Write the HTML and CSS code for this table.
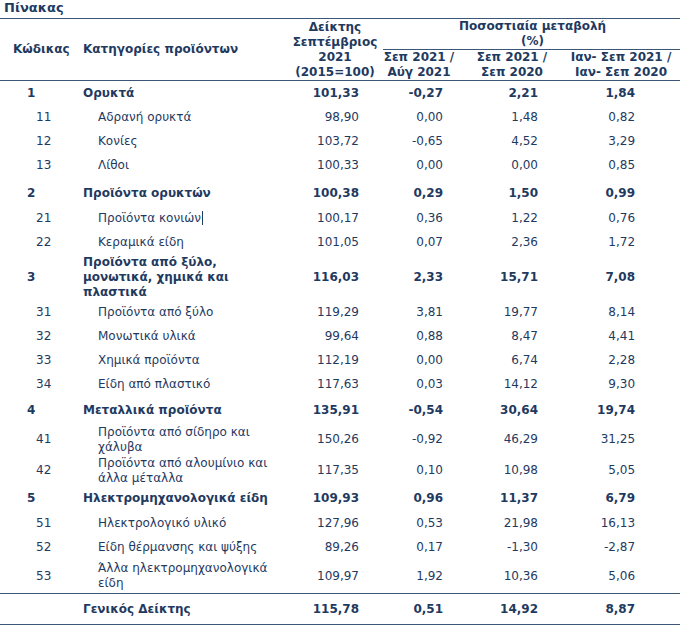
FILE: index.html
```html
<!DOCTYPE html>
<html lang="el">
<head>
<meta charset="utf-8">
<link rel="stylesheet" href="styles.css">
</head>
<body>
<div class="title">Πίνακας</div>
<table class="tbl">
  <colgroup>
    <col class="ca"><col class="cb"><col class="cc"><col class="cd"><col class="ce"><col class="cf">
  </colgroup>
  <thead>
    <tr class="hr1">
      <th rowspan="2" class="h-code">Κώδικας</th>
      <th rowspan="2" class="h-cat">Κατηγορίες προϊόντων</th>
      <th rowspan="2" class="h-idx">Δείκτης<br>Σεπτέμβριος<br>2021<br>(2015=100)</th>
      <th colspan="3" class="h-pct">Ποσοστιαία μεταβολή<br>(%)</th>
    </tr>
    <tr class="hr2">
      <th class="h-d">Σεπ 2021 /<br>Αύγ 2021</th>
      <th class="h-e">Σεπ 2021 /<br>Σεπ 2020</th>
      <th class="h-f">Ιαν- Σεπ 2021 /<br>Ιαν- Σεπ 2020</th>
    </tr>
  </thead>
  <tbody>
    <tr class="grp h24"><td class="code">1</td><td class="cat">Ορυκτά</td><td class="nc">101,33</td><td class="nd">-0,27</td><td class="ne">2,21</td><td class="nf">1,84</td></tr>
    <tr class="sub h24"><td class="code">11</td><td class="cat">Αδρανή ορυκτά</td><td class="nc">98,90</td><td class="nd">0,00</td><td class="ne">1,48</td><td class="nf">0,82</td></tr>
    <tr class="sub h24"><td class="code">12</td><td class="cat">Κονίες</td><td class="nc">103,72</td><td class="nd">-0,65</td><td class="ne">4,52</td><td class="nf">3,29</td></tr>
    <tr class="sub h24"><td class="code">13</td><td class="cat">Λίθοι</td><td class="nc">100,33</td><td class="nd">0,00</td><td class="ne">0,00</td><td class="nf">0,85</td></tr>
    <tr class="grp h29"><td class="code">2</td><td class="cat">Προϊόντα ορυκτών</td><td class="nc">100,38</td><td class="nd">0,29</td><td class="ne">1,50</td><td class="nf">0,99</td></tr>
    <tr class="sub h24"><td class="code">21</td><td class="cat">Προϊόντα κονιών<span class="caret"></span></td><td class="nc">100,17</td><td class="nd">0,36</td><td class="ne">1,22</td><td class="nf">0,76</td></tr>
    <tr class="sub h24"><td class="code">22</td><td class="cat">Κεραμικά είδη</td><td class="nc">101,05</td><td class="nd">0,07</td><td class="ne">2,36</td><td class="nf">1,72</td></tr>
    <tr class="grp h46"><td class="code">3</td><td class="cat">Προϊόντα από ξύλο,<br>μονωτικά, χημικά και<br>πλαστικά</td><td class="nc">116,03</td><td class="nd">2,33</td><td class="ne">15,71</td><td class="nf">7,08</td></tr>
    <tr class="sub h24"><td class="code">31</td><td class="cat">Προϊόντα από ξύλο</td><td class="nc">119,29</td><td class="nd">3,81</td><td class="ne">19,77</td><td class="nf">8,14</td></tr>
    <tr class="sub h24"><td class="code">32</td><td class="cat">Μονωτικά υλικά</td><td class="nc">99,64</td><td class="nd">0,88</td><td class="ne">8,47</td><td class="nf">4,41</td></tr>
    <tr class="sub h24"><td class="code">33</td><td class="cat">Χημικά προϊόντα</td><td class="nc">112,19</td><td class="nd">0,00</td><td class="ne">6,74</td><td class="nf">2,28</td></tr>
    <tr class="sub h24"><td class="code">34</td><td class="cat">Είδη από πλαστικό</td><td class="nc">117,63</td><td class="nd">0,03</td><td class="ne">14,12</td><td class="nf">9,30</td></tr>
    <tr class="grp h28"><td class="code">4</td><td class="cat">Μεταλλικά προϊόντα</td><td class="nc">135,91</td><td class="nd">-0,54</td><td class="ne">30,64</td><td class="nf">19,74</td></tr>
    <tr class="sub h31"><td class="code">41</td><td class="cat">Προϊόντα από σίδηρο και<br>χάλυβα</td><td class="nc">150,26</td><td class="nd">-0,92</td><td class="ne">46,29</td><td class="nf">31,25</td></tr>
    <tr class="sub h31"><td class="code">42</td><td class="cat">Προϊόντα από αλουμίνιο και<br>άλλα μέταλλα</td><td class="nc">117,35</td><td class="nd">0,10</td><td class="ne">10,98</td><td class="nf">5,05</td></tr>
    <tr class="grp h26"><td class="code">5</td><td class="cat">Ηλεκτρομηχανολογικά είδη</td><td class="nc">109,93</td><td class="nd">0,96</td><td class="ne">11,37</td><td class="nf">6,79</td></tr>
    <tr class="sub h24"><td class="code">51</td><td class="cat">Ηλεκτρολογικό υλικό</td><td class="nc">127,96</td><td class="nd">0,53</td><td class="ne">21,98</td><td class="nf">16,13</td></tr>
    <tr class="sub h24"><td class="code">52</td><td class="cat">Είδη θέρμανσης και ψύξης</td><td class="nc">89,26</td><td class="nd">0,17</td><td class="ne">-1,30</td><td class="nf">-2,87</td></tr>
    <tr class="sub h35"><td class="code">53</td><td class="cat">Άλλα ηλεκτρομηχανολογικά<br>είδη</td><td class="nc">109,97</td><td class="nd">1,92</td><td class="ne">10,36</td><td class="nf">5,06</td></tr>
    <tr class="grp total h30"><td class="code"></td><td class="cat">Γενικός Δείκτης</td><td class="nc">115,78</td><td class="nd">0,51</td><td class="ne">14,92</td><td class="nf">8,87</td></tr>
  </tbody>
</table>
</body>
</html>
```
FILE: styles.css
```css
html, body {
  margin: 0;
  padding: 0;
  background: #ffffff;
}
body {
  font-family: "DejaVu Sans", Verdana, sans-serif;
  font-size: 12px;
  line-height: 15px;
  color: #1f3a5f;
}
.title {
  height: 18px;
  line-height: 16px;
  padding-left: 4px;
  font-weight: bold;
  font-size: 13px;
}
.tbl {
  border-collapse: collapse;
  table-layout: fixed;
  width: 680px;
}
.ca { width: 77px; }
.cb { width: 208px; }
.cc { width: 98px; }
.cd { width: 72px; }
.ce { width: 114px; }
.cf { width: 111px; }

.tbl th, .tbl td {
  padding: 0;
  vertical-align: middle;
}
.tbl th {
  font-weight: bold;
  text-align: center;
}
.tbl .hr1 th {
  border-top: 1px solid #3b5676;
  height: 28px;
}
.tbl .hr2 th {
  height: 27px;
  border-top: 1px solid #3b5676;
  border-bottom: 1px solid #3b5676;
}
.tbl .h-code, .tbl .h-cat, .tbl .h-idx {
  border-bottom: 1px solid #3b5676;
}
.tbl .h-code {
  text-align: left;
  padding-left: 13px;
}
.tbl .h-cat {
  text-align: left;
  padding-left: 6px;
}
.tbl .h-idx {
  padding-left: 2px;
}
.tbl .h-f {
  padding-right: 7px;
}
.tbl .h-pct {
  padding-left: 2px;
}

.tbl .code {
  text-align: left;
}
.tbl .grp td { font-weight: bold; }
.tbl .grp .code { padding-left: 27px; }
.tbl .sub .code { padding-left: 36px; }
.tbl .grp .cat { padding-left: 6px; }
.tbl .sub .cat { padding-left: 21px; }

.tbl .nc, .tbl .nd, .tbl .ne, .tbl .nf { text-align: right; }
.tbl .nc { padding-right: 24px; }
.tbl .nd { padding-right: 12px; }
.tbl .ne { padding-right: 31px; }
.tbl .nf { padding-right: 45px; }

.tbl .h24 td { height: 24px; }
.tbl .h26 td { height: 25px; }
.tbl .h28 td { height: 27px; padding-top: 1px; }
.tbl .h29 td { height: 26px; padding-top: 3px; }
.tbl .h30 td { height: 30px; }
.tbl .h31 td { height: 31px; }
.tbl .h35 td { height: 34px; }
.tbl .h46 td { height: 46px; }

.tbl .total td {
  border-top: 1px solid #3b5676;
  border-bottom: 1px solid #3b5676;
}
.caret {
  display: inline-block;
  width: 1px;
  height: 14px;
  background: #1f3a5f;
  vertical-align: -3px;
  margin-left: 1px;
}
```
